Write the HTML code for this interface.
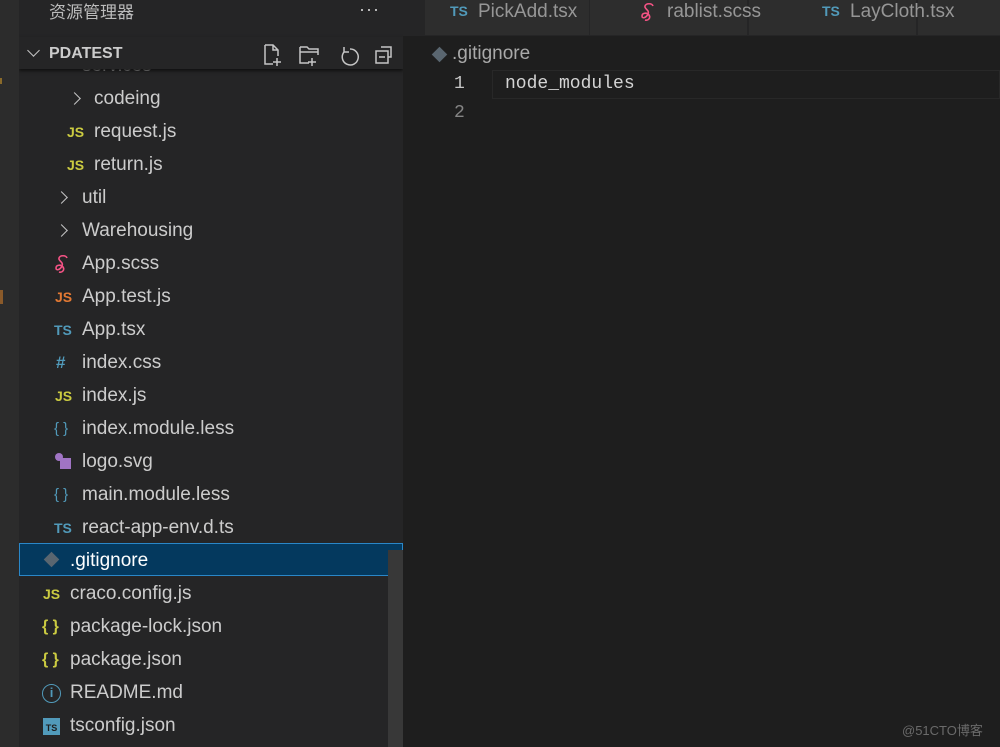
<!DOCTYPE html>
<html><head><meta charset="utf-8"><style>
*{margin:0;padding:0;box-sizing:border-box}
body{width:1000px;height:747px;overflow:hidden;background:#1e1e1e;font-family:"Liberation Sans","Noto Sans CJK SC",sans-serif;color:#cccccc;position:relative}
.abs{position:absolute}
#act{left:0;top:0;width:19px;height:747px;background:#2c2c2c}
#side{left:19px;top:0;width:384px;height:747px;background:#252526;overflow:hidden}
.row{position:absolute;left:0;width:384px;height:33px;line-height:34px;font-size:19px;color:#cccccc;white-space:nowrap}
.row .ic{position:absolute;top:0;font-size:14px;font-weight:bold;line-height:34px}
.row .tx{position:absolute;top:0}
.chev{position:absolute;top:12px;width:9px;height:9px;border-right:1.6px solid #c5c5c5;border-bottom:1.6px solid #c5c5c5;transform:rotate(-45deg)}
.js{color:#cbcb41}.jso{color:#e37933}.ts{color:#519aba}.less{color:#519aba}.json{color:#cbcb41}
</style></head><body>
<div id="act" class="abs">
 <div class="abs" style="left:0;top:78px;width:2px;height:6px;background:#8a6a2a"></div>
 <div class="abs" style="left:0;top:290px;width:3px;height:14px;background:#8a5a2a"></div>
</div>
<div id="side" class="abs">
 <div class="abs" style="left:30px;top:1px;font-size:17px;line-height:24px;color:#bbbbbb">资源管理器</div>
 <div class="abs" style="left:340px;top:-1px;font-size:18px;color:#ccc;letter-spacing:1px">···</div>
 <div class="row" style="top:49px"><span class="chev" style="left:44px;transform:rotate(45deg);top:6px"></span><span class="tx" style="left:63px">services</span></div>
 <div class="row" style="top:82px"><span class="chev" style="left:51px"></span><span class="tx" style="left:75px">codeing</span></div>
 <div class="row" style="top:115px"><span class="ic js" style="left:48px">JS</span><span class="tx" style="left:75px">request.js</span></div>
 <div class="row" style="top:148px"><span class="ic js" style="left:48px">JS</span><span class="tx" style="left:75px">return.js</span></div>
 <div class="row" style="top:181px"><span class="chev" style="left:38px"></span><span class="tx" style="left:63px">util</span></div>
 <div class="row" style="top:214px"><span class="chev" style="left:38px"></span><span class="tx" style="left:63px">Warehousing</span></div>
 <div class="row" style="top:247px"><svg class="abs" style="left:35px;top:7px" width="16" height="20" viewBox="0 0 16 20" fill="none" stroke="#f55385" stroke-width="1.6"><path d="M13 4c-1-3-7-3-8 0s5 4 3 8-6 5-6 2 5-4 7-1-1 6-4 5"/></svg><span class="tx" style="left:63px">App.scss</span></div>
 <div class="row" style="top:280px"><span class="ic jso" style="left:36px">JS</span><span class="tx" style="left:63px">App.test.js</span></div>
 <div class="row" style="top:313px"><span class="ic ts" style="left:35px">TS</span><span class="tx" style="left:63px">App.tsx</span></div>
 <div class="row" style="top:346px"><span class="ic ts" style="left:37px;font-size:17px">#</span><span class="tx" style="left:63px">index.css</span></div>
 <div class="row" style="top:379px"><span class="ic js" style="left:36px">JS</span><span class="tx" style="left:63px">index.js</span></div>
 <div class="row" style="top:412px"><span class="ic less" style="left:35px;font-weight:normal;font-size:15px">{ }</span><span class="tx" style="left:63px">index.module.less</span></div>
 <div class="row" style="top:445px"><span class="abs" style="left:36px;top:8px;width:8px;height:8px;border-radius:50%;background:#a074c4"></span><span class="abs" style="left:41px;top:13px;width:11px;height:11px;background:#a074c4"></span><span class="tx" style="left:63px">logo.svg</span></div>
 <div class="row" style="top:478px"><span class="ic less" style="left:35px;font-weight:normal;font-size:15px">{ }</span><span class="tx" style="left:63px">main.module.less</span></div>
 <div class="row" style="top:511px"><span class="ic ts" style="left:35px">TS</span><span class="tx" style="left:63px">react-app-env.d.ts</span></div>
 <div class="row" style="top:543px;background:#04395e;border:1px solid #2a87c8;line-height:33px"><span class="abs" style="left:26px;top:10px;width:11px;height:11px;background:#5a6670;transform:rotate(45deg)"></span><span class="tx" style="left:50px;color:#fff">.gitignore</span></div>
 <div class="row" style="top:577px"><span class="ic js" style="left:24px">JS</span><span class="tx" style="left:51px">craco.config.js</span></div>
 <div class="row" style="top:610px"><span class="ic json" style="left:23px;font-size:16px">{ }</span><span class="tx" style="left:51px">package-lock.json</span></div>
 <div class="row" style="top:643px"><span class="ic json" style="left:23px;font-size:16px">{ }</span><span class="tx" style="left:51px">package.json</span></div>
 <div class="row" style="top:676px"><span class="abs" style="left:23px;top:8px;width:19px;height:19px;border:1.5px solid #519aba;border-radius:50%;color:#519aba;font-size:13px;line-height:16px;text-align:center;font-weight:bold">i</span><span class="tx" style="left:51px">README.md</span></div>
 <div class="row" style="top:709px"><span class="abs" style="left:24px;top:9px;width:17px;height:17px;background:#519aba;color:#1e1e1e;font-size:9px;line-height:20px;text-align:center;font-weight:bold">TS</span><span class="tx" style="left:51px">tsconfig.json</span></div>
 <div class="abs" style="left:0;top:37px;width:384px;height:32px;background:#252526;box-shadow:0 2px 3px #111"></div>
 <div class="abs" style="left:10px;top:46px;width:9px;height:9px;border-right:1.6px solid #c5c5c5;border-bottom:1.6px solid #c5c5c5;transform:rotate(45deg)"></div>
 <div class="abs" style="left:30px;top:45px;font-size:16px;font-weight:bold;color:#cccccc">PDATEST</div>
 <svg class="abs" style="left:243px;top:43px" width="130" height="24" viewBox="0 0 130 24" fill="none" stroke="#c5c5c5" stroke-width="1.5">
  <path d="M3 2h8l5 5v6M3 2v19h8M11 2v5h5M15 15v8M11 19h8"/>
  <path d="M38 4h7l2 2h9v6M38 4v16h9M38 9h18M50 15v8M46 19h8"/>
  <path d="M88 6a8 8 0 1 1 -6 3M82 4v5h5"/>
  <path d="M119 4h10v10h-3M114 8h12v12h-12zM117 14h6"/>
 </svg>
 <div class="abs" style="left:369px;top:550px;width:15px;height:197px;background:#383838"></div>
</div>
<div class="abs" style="left:403px;top:0;width:597px;height:36px;background:#252526"></div>
<div class="abs" style="left:425px;top:0;width:164px;height:35px;background:#2d2d2d"></div>
<div class="abs" style="left:590px;top:0;width:157px;height:35px;background:#2d2d2d"></div>
<div class="abs" style="left:749px;top:0;width:167px;height:35px;background:#2d2d2d"></div>
<div class="abs" style="left:918px;top:0;width:82px;height:35px;background:#2d2d2d"></div>
<div class="abs" style="left:450px;top:3px;font-size:14px;font-weight:bold;color:#519aba">TS</div>
<div class="abs" style="left:478px;top:1px;font-size:19px;color:#969696">PickAdd.tsx</div>
<svg class="abs" style="left:640px;top:2px" width="16" height="20" viewBox="0 0 16 20" fill="none" stroke="#f55385" stroke-width="1.6"><path d="M13 4c-1-3-7-3-8 0s5 4 3 8-6 5-6 2 5-4 7-1-1 6-4 5"/></svg>
<div class="abs" style="left:667px;top:1px;font-size:19px;color:#969696">rablist.scss</div>
<div class="abs" style="left:822px;top:3px;font-size:14px;font-weight:bold;color:#519aba">TS</div>
<div class="abs" style="left:850px;top:1px;font-size:19px;color:#969696">LayCloth.tsx</div>
<div class="abs" style="left:434px;top:49px;width:11px;height:11px;background:#5a6670;transform:rotate(45deg)"></div>
<div class="abs" style="left:452px;top:43px;font-size:19px;color:#a9a9a9">.gitignore</div>
<div class="abs" style="left:492px;top:70px;width:508px;height:29px;border:1px solid #282828"></div>
<div class="abs" style="left:454px;top:74px;font-family:'Liberation Mono',monospace;font-size:18px;color:#c6c6c6">1</div>
<div class="abs" style="left:454px;top:103px;font-family:'Liberation Mono',monospace;font-size:18px;color:#858585">2</div>
<div class="abs" style="left:505px;top:74px;font-family:'Liberation Mono',monospace;font-size:18px;color:#d4d4d4">node_modules</div>
<div class="abs" style="left:902px;top:720px;font-size:13px;color:#6a6a6a">@51CTO博客</div>
</body></html>
